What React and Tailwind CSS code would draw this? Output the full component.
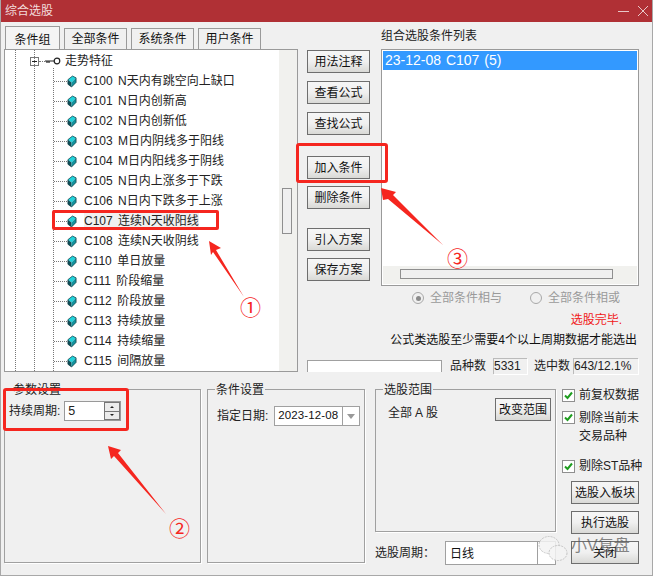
const font = { fontFamily: '"Liberation Sans", "Noto Sans CJK SC", sans-serif' };

const rows = [
  "C100 N天内有跳空向上缺口",
  "C101 N日内创新高",
  "C102 N日内创新低",
  "C103 M日内阴线多于阳线",
  "C104 M日内阳线多于阴线",
  "C105 N日内上涨多于下跌",
  "C106 N日内下跌多于上涨",
  "C107 连续N天收阳线",
  "C108 连续N天收阴线",
  "C110 单日放量",
  "C111 阶段缩量",
  "C112 阶段放量",
  "C113 持续放量",
  "C114 持续缩量",
  "C115 间隔放量",
];

const Cube = () => (
  <svg width="10" height="13" viewBox="0 0 11 14" className="shrink-0">
    <path d="M1 5 L6 1 L10 3 L5 8 Z" fill="#22d3dc" />
    <path d="M1 5 L5 8 L5 13 L1 10 Z" fill="#0f4f58" />
    <path d="M5 8 L10 3 L10 8 L5 13 Z" fill="#12939e" />
    <path d="M1 5 L6 1 L10 3 L10 8 L5 13 L1 10 Z" fill="none" stroke="#0b3b44" strokeWidth="0.8" />
  </svg>
);

const Key = () => (
  <svg width="16" height="8" viewBox="0 0 16 8" className="shrink-0">
    <path d="M0 4 H9 M2 4 V6 M4 4 V6" stroke="#222" strokeWidth="1.2" fill="none" />
    <circle cx="12" cy="4" r="2.8" stroke="#222" strokeWidth="1.2" fill="none" />
  </svg>
);

const Btn = ({ children, className = "" }) => (
  <div className={`flex h-[23px] shrink-0 items-center justify-center border border-[#6e6e6e] bg-gradient-to-b from-[#f6f6f6] via-[#f0f0f0] to-[#d9d9d6] text-[12px] text-[#111] ${className}`}>
    {children}
  </div>
);

const Tab = ({ children, active }) => (
  <div className={`flex items-center justify-center border-x border-t border-[#9a9a9a] text-[12px] text-[#111] ${active ? "h-[23px] w-[55px] bg-[#f4f4f4] pt-1" : "h-[21px] w-[63px] bg-[#f0f0f0]"}`}>
    {children}
  </div>
);

const Group = ({ title, className = "", children }) => (
  <div className={`relative border border-[#a0a0a0] shadow-[1px_1px_0_#fff] ${className}`}>
    <span className="absolute -top-[8px] left-[7px] bg-[#f0f0f0] px-[1px] text-[12px] leading-[16px] text-[#222]">{title}</span>
    {children}
  </div>
);

const Check = ({ children, className = "", leading = "leading-[17px]" }) => (
  <div className={`flex items-start gap-[4px] ${className}`}>
    <div className="mt-[2px] flex h-[13px] w-[13px] shrink-0 items-center justify-center border border-[#8f8f8f] bg-white">
      <svg width="9" height="9" viewBox="0 0 9 9">
        <path d="M1 4.5 L3.5 7 L8 1.5" stroke="#1f9d1f" strokeWidth="2" fill="none" />
      </svg>
    </div>
    <div className={`whitespace-nowrap text-[12px] text-[#222] ${leading}`}>{children}</div>
  </div>
);

const Radio = ({ on, children }) => (
  <div className="flex items-center gap-[6px] text-[12px] text-[#9a9a9a]">
    <div className="flex h-[12px] w-[12px] items-center justify-center rounded-full border border-[#a8a8a8] bg-[#f0f0f0]">
      {on && <div className="h-[5px] w-[5px] rounded-full bg-[#8a8a8a]" />}
    </div>
    {children}
  </div>
);

const App = () => {
  return (
    <div style={font} className="relative flex h-[576px] w-[653px] flex-col overflow-hidden border-x border-b border-[#a8a8a8] bg-[#f0f0f0]">
      {/* title bar */}
      <div className="-mx-[1px] flex h-[22px] shrink-0 items-center justify-between bg-[#b03035] pl-[5px] pr-[3px] text-[12px] text-[#f2dcdc]">
        <span>综合选股</span>
        <div className="flex items-center gap-[9px] pr-[2px]">
          <div className="h-[1px] w-[11px] bg-[#e8c8c8]" />
          <svg width="10" height="10" viewBox="0 0 10 10">
            <path d="M0 0 L10 10 M10 0 L0 10" stroke="#e8c8c8" strokeWidth="1" />
          </svg>
        </div>
      </div>

      <div className="flex h-[351px] shrink-0">
        {/* left: tabs + tree */}
        <div className="ml-[3px] flex w-[294px] shrink-0 flex-col">
          <div className="ml-[1px] mt-[4px] flex h-[23px] items-end gap-[4px]">
            <Tab active>条件组</Tab>
            <Tab>全部条件</Tab>
            <Tab>系统条件</Tab>
            <Tab>用户条件</Tab>
          </div>
          <div className="relative flex h-[323px] overflow-hidden border border-[#9a9a9a] bg-white">
            <div className="relative flex-1 overflow-hidden pt-[1px]">
              {/* guide lines */}
              <div className="absolute bottom-0 left-[10px] top-0 border-l border-dotted border-[#777]" />
              <div className="absolute bottom-0 left-[29px] top-0 border-l border-dotted border-[#777]" />
              <div className="absolute bottom-0 left-[48px] top-[18px] border-l border-dotted border-[#777]" />
              <div className="flex h-[20px] items-center pl-[25px]">
                <div className="flex h-[9px] w-[9px] items-center justify-center border border-[#777] bg-white">
                  <div className="h-[1px] w-[5px] bg-[#222]" />
                </div>
                <div className="w-[6px] border-t border-dotted border-[#777]" />
                <Key />
                <span className="ml-[4px] text-[12px] text-[#222]">走势特征</span>
              </div>
              {rows.map((r, i) => (
                <div key={r} className="relative flex h-[20px] items-center pl-[49px]">
                  <div className="w-[13px] border-t border-dotted border-[#777]" />
                  <Cube />
                  <span className={`ml-[7px] whitespace-nowrap text-[12px] leading-[16px] text-[#222] [word-spacing:2px] ${i === 7 ? "bg-[#f0f0f0]" : ""}`}>{r}</span>
                </div>
              ))}
            </div>
            <div className="flex w-[18px] shrink-0 flex-col bg-[#f1f1ee] pl-[3px] pt-[138px]">
              <div className="h-[46px] w-[10px] border border-[#8f8f8f] bg-[#f0f0f0]" />
            </div>
          </div>
        </div>

        {/* button column */}
        <div className="ml-[9px] flex w-[63px] shrink-0 flex-col pt-[28px]">
          <Btn>用法注释</Btn>
          <Btn className="mt-[8px]">查看公式</Btn>
          <Btn className="mt-[8px]">查找公式</Btn>
          <Btn className="mt-[21px]">加入条件</Btn>
          <Btn className="mt-[7px]">删除条件</Btn>
          <Btn className="mt-[19px]">引入方案</Btn>
          <Btn className="mt-[7px]">保存方案</Btn>
        </div>

        {/* right column */}
        <div className="ml-[11px] flex w-[258px] shrink-0 flex-col">
          <div className="flex h-[27px] items-end pb-[5px] text-[12px] leading-[16px] text-[#222]">组合选股条件列表</div>
          <div className="flex h-[237px] flex-col border border-[#9a9a9a] bg-white p-[1px]">
            <div className="h-[19px] bg-[#3399ff] pl-[2px] text-[14px] leading-[19px] text-white [word-spacing:1px]">23-12-08 C107 (5)</div>
            <div className="mt-auto flex h-[18px] flex-col bg-[#f1f1ee] pl-[17px] pt-[3px]">
              <div className="h-[10px] w-[213px] border border-[#8f8f8f] bg-[#f0f0f0]" />
            </div>
          </div>
          <div className="ml-[31px] mt-[3px] flex gap-[28px]">
            <Radio on>全部条件相与</Radio>
            <Radio>全部条件相或</Radio>
          </div>
        </div>
      </div>

      {/* status lines, under the right column */}
      <div className="-mt-[64px] ml-[306px] flex h-[64px] shrink-0 flex-col">
        <div className="mt-[3px] pr-[30px] text-right text-[12px] leading-[17px] text-[#f01818]">选股完毕.</div>
        <div className="mt-[3px] pr-[15px] text-right text-[12px] leading-[17px] text-[#111]">公式类选股至少需要4个以上周期数据才能选出</div>
        <div className="mt-[8px] flex items-center text-[12px] text-[#222]">
          <div className="h-[12px] w-[135px] border-x border-t border-[#a0a0a0] bg-white" />
          <span className="ml-[8px]">品种数</span>
          <div className="ml-[7px] flex h-[16px] w-[34px] items-center bg-[#f0f0f0] pl-[1px] shadow-[inset_1px_1px_0_#bbb,1px_1px_0_#fff]">5331</div>
          <span className="ml-[7px]">选中数</span>
          <div className="ml-[3px] flex h-[16px] w-[65px] items-center bg-[#f0f0f0] pl-[1px] shadow-[inset_1px_1px_0_#bbb,1px_1px_0_#fff]">643/12.1%</div>
        </div>
      </div>

      {/* lower panels */}
      <div className="ml-[3px] mt-[16px] flex">
        <Group title="参数设置" className="h-[174px] w-[197px] shrink-0">
          <div className="ml-[4px] mt-[11px] flex items-center text-[12px] text-[#222]">
            <span>持续周期:</span>
            <div className="ml-[4px] flex h-[20px] w-[57px] items-center justify-between border border-[#999] bg-white pl-[3px] text-[12.5px]">
              5
              <div className="flex h-[18px] w-[16px] flex-col gap-[1px] bg-[#777] p-[1px]">
                <div className="flex flex-1 items-center justify-center bg-[#ececec]">
                  <div className="border-x-[2px] border-b-[2px] border-x-transparent border-b-[#222]" />
                </div>
                <div className="flex flex-1 items-center justify-center bg-[#ececec]">
                  <div className="border-x-[2px] border-t-[2px] border-x-transparent border-t-[#222]" />
                </div>
              </div>
            </div>
          </div>
        </Group>
        <Group title="条件设置" className="ml-[6px] h-[174px] w-[158px] shrink-0">
          <div className="ml-[9px] mt-[16px] flex items-center text-[12px] text-[#222]">
            <span>指定日期:</span>
            <div className="ml-[6px] flex h-[20px] w-[86px] items-center border border-[#a0a0a0] bg-white text-[11.5px] tracking-[0.1px] text-[#111]">
              <span className="w-[67px] shrink-0 pl-[3px]">2023-12-08</span>
              <div className="flex h-full flex-1 items-center justify-center border-l border-[#a0a0a0]">
                <div className="border-x-[4px] border-t-[5px] border-x-transparent border-t-[#999]" />
              </div>
            </div>
          </div>
        </Group>
        <div className="ml-[10px] flex w-[181px] shrink-0 flex-col">
          <Group title="选股范围" className="h-[143px] w-[181px]">
            <div className="flex items-start justify-between pl-[12px] pr-[4px] pt-[8px]">
              <span className="mt-[6px] text-[12px] text-[#222]">
                全部<span className="mx-[3px]">A</span>股
              </span>
              <Btn className="w-[56px]">改变范围</Btn>
            </div>
          </Group>
          <div className="mt-[9px] flex items-center">
            <span className="w-[70px] shrink-0 text-[12px] text-[#222]">选股周期：</span>
            <div className="flex h-[24px] flex-1 border border-[#a0a0a0] bg-white text-[12px] leading-[24px] text-[#111]">
              <span className="flex-1 pl-[4px]">日线</span>
              <div className="w-[18px] border-l border-[#a0a0a0]" />
            </div>
          </div>
        </div>
        <div className="ml-[6px] flex w-[78px] shrink-0 flex-col">
          <Check className="-mt-[2px]">前复权数据</Check>
          <Check className="mt-[5px]" leading="leading-[18px]">
            剔除当前未
            <br />
            交易品种
          </Check>
          <Check className="mt-[13px]">剔除ST品种</Check>
          <Btn className="ml-[9px] mt-[6px] w-[68px]">选股入板块</Btn>
          <Btn className="ml-[9px] mt-[7px] w-[68px]">执行选股</Btn>
          <Btn className="ml-[9px] mt-[7px] w-[68px]">关闭</Btn>
        </div>
      </div>

      {/* red annotations */}
      <div className="absolute left-[51px] top-[210px] h-[20px] w-[167px] rounded-[2px] border-[3px] border-[#f5261f]" />
      <div className="absolute left-[295px] top-[143px] h-[40px] w-[92px] rounded-[3px] border-[3px] border-[#f5261f]" />
      <div className="absolute left-[2px] top-[388px] h-[43px] w-[126px] rounded-[3px] border-[3px] border-[#f5261f]" />
      <svg className="absolute left-0 top-0" width="653" height="576" viewBox="0 0 653 576">
        <path d="M208 241 L220 248 L215 250 L243 297 L212 252 L210 255 Z" fill="#f5261f" />
        <path d="M380 188 L395 192 L392 195 L442 245 L387 199 L382 200 Z" fill="#f5261f" />
        <path d="M107 446 L120 450 L117 453 L165 514 L113 456 L110 459 Z" fill="#f5261f" />
      </svg>
      <span className="absolute left-[239px] top-[296px] text-[21px] leading-[24px] text-[#f5261f]">①</span>
      <span className="absolute left-[168px] top-[517px] text-[21px] leading-[24px] text-[#f5261f]">②</span>
      <span className="absolute left-[446px] top-[247px] text-[21px] leading-[24px] text-[#f5261f]">③</span>

      {/* watermark */}
      <svg className="absolute left-[536px] top-[534px]" width="32" height="32" viewBox="0 0 32 32" opacity="0.85">
        <ellipse cx="12" cy="11" rx="10" ry="8.5" fill="#f4f4f4" stroke="#bdbdbd" strokeDasharray="2 1" />
        <ellipse cx="21" cy="19" rx="9" ry="7.5" fill="#f4f4f4" stroke="#bdbdbd" strokeDasharray="2 1" />
      </svg>
      <span className="absolute left-[570px] top-[536px] text-[16px] leading-[20px] text-[#555] opacity-70">小V复盘</span>
    </div>
  );
};

export default App;
